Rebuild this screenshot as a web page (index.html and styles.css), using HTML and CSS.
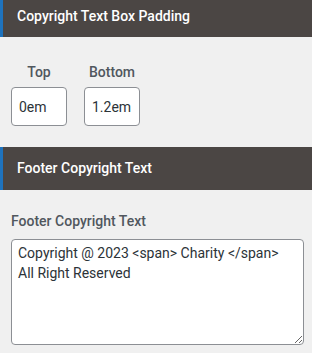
FILE: index.html
```html
<!DOCTYPE html>
<html lang="en">
<head>
    <meta charset="UTF-8">
    <meta name="viewport" content="width=device-width, initial-scale=1.0">
    <title>Footer settings</title>
    <link rel="stylesheet" href="styles.css">
</head>
<body>

<div class="panel">
    <!-- Padding section -->
    <div class="section-title first">Copyright Text Box Padding</div>
    <div class="padding-row">
        <div class="padding-field">
            <label for="pad-top">Top</label>
            <input type="text" id="pad-top" value="0em">
        </div>
        <div class="padding-field">
            <label for="pad-bottom">Bottom</label>
            <input type="text" id="pad-bottom" value="1.2em">
        </div>
    </div>

    <!-- Copyright text section -->
    <div class="section-title">Footer Copyright Text</div>
    <div class="text-field">
        <label for="copyright">Footer Copyright Text</label>
        <textarea id="copyright">Copyright @ 2023 &lt;span&gt; Charity &lt;/span&gt;
All Right Reserved</textarea>
    </div>
</div>

</body>
</html>
```

FILE: styles.css
```css
body {
    font-family: Roboto, Arial, sans-serif;
    background-color: #f0f0f0;
    margin: 0;
    padding: 0;
}

.panel {
    width: 312px;
}

.section-title {
    background-color: #4b4644;
    border-left: 3px solid #1e73be;
    color: #fff;
    font-size: 14px;
    font-weight: 500;
    height: 43px;
    line-height: 42px;
    padding-left: 14px;
    box-sizing: border-box;
}

.section-title.first {
    height: 37px;
    line-height: 33px;
}

.padding-row {
    display: flex;
    gap: 17px;
    padding: 25px 11px 21px;
}

.padding-field {
    display: flex;
    flex-direction: column;
    align-items: center;
    width: 56px;
}

label {
    display: block;
    color: #50575e;
    font-size: 14px;
    font-weight: 500;
    line-height: 20px;
}

.padding-field label {
    margin-bottom: 5px;
}

input,
textarea {
    font-family: Roboto, Arial, sans-serif;
    font-size: 14px;
    color: #2c3338;
    background-color: #fff;
    border: 1px solid #8c8f94;
    border-radius: 4px;
    box-sizing: border-box;
}

input {
    width: 56px;
    height: 39px;
    padding: 0 7px;
}

.text-field {
    padding: 21px 8px 0 11px;
}

.text-field label {
    margin-bottom: 8px;
}

textarea {
    display: block;
    width: 293px;
    height: 106px;
    padding: 3px 6px;
    line-height: 20px;
    resize: vertical;
}
```
